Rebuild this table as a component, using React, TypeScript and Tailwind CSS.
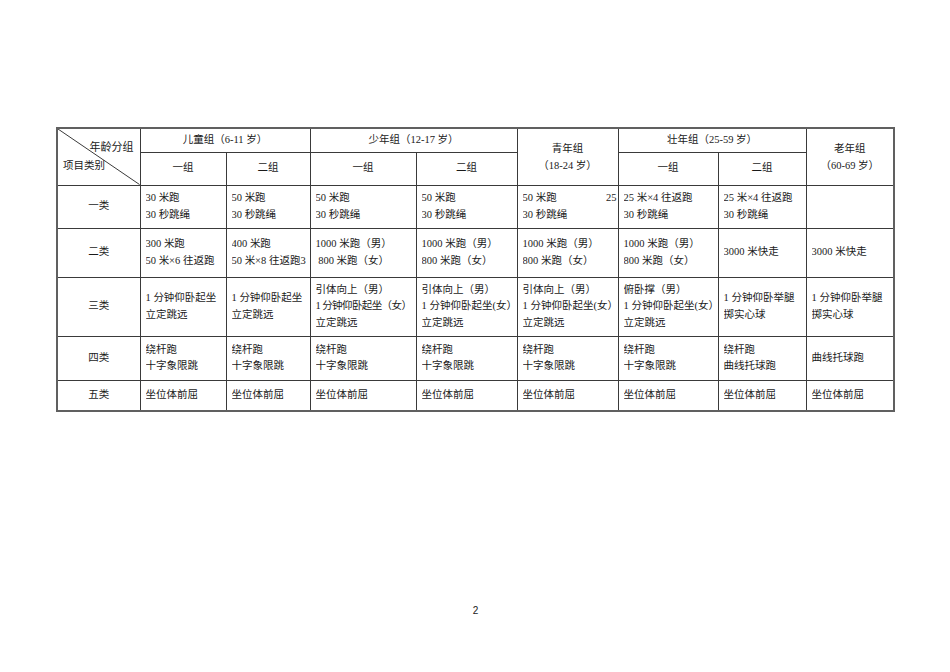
import React from "react";

const COLS = [83, 86, 84, 106, 101, 101, 100, 88, 88];

type Cell = string[];

const ROWS: { label: string; h: string; cells: Cell[] }[] = [
  {
    label: "一类",
    h: "h-[43px]",
    cells: [
      ["30 米跑", "30 秒跳绳"],
      ["50 米跑", "30 秒跳绳"],
      ["50 米跑", "30 秒跳绳"],
      ["50 米跑", "30 秒跳绳"],
      ["50 米跑", "30 秒跳绳"],
      ["25 米×4 往返跑", "30 秒跳绳"],
      ["25 米×4 往返跑", "30 秒跳绳"],
      [],
    ],
  },
  {
    label: "二类",
    h: "h-[49px]",
    cells: [
      ["300 米跑", "50 米×6 往返跑"],
      ["400 米跑", "50 米×8 往返跑3"],
      ["1000 米跑（男）", "\u00a0800 米跑（女）"],
      ["1000 米跑（男）", "800 米跑（女）"],
      ["1000 米跑（男）", "800 米跑（女）"],
      ["1000 米跑（男）", "800 米跑（女）"],
      ["3000 米快走"],
      ["3000 米快走"],
    ],
  },
  {
    label: "三类",
    h: "h-[59px]",
    cells: [
      ["1 分钟仰卧起坐", "立定跳远"],
      ["1 分钟仰卧起坐", "立定跳远"],
      ["引体向上（男）", "1 分钟仰卧起坐（女）", "立定跳远"],
      ["引体向上（男）", "1 分钟仰卧起坐(女）", "立定跳远"],
      ["引体向上（男）", "1 分钟仰卧起坐(女）", "立定跳远"],
      ["俯卧撑（男）", "1 分钟仰卧起坐(女）", "立定跳远"],
      ["1 分钟仰卧举腿", "掷实心球"],
      ["1 分钟仰卧举腿", "掷实心球"],
    ],
  },
  {
    label: "四类",
    h: "h-[44px]",
    cells: [
      ["绕杆跑", "十字象限跳"],
      ["绕杆跑", "十字象限跳"],
      ["绕杆跑", "十字象限跳"],
      ["绕杆跑", "十字象限跳"],
      ["绕杆跑", "十字象限跳"],
      ["绕杆跑", "十字象限跳"],
      ["绕杆跑", "曲线托球跑"],
      ["曲线托球跑"],
    ],
  },
  {
    label: "五类",
    h: "h-[31px]",
    cells: Array.from({ length: 8 }, () => ["坐位体前屈"]),
  },
];

const td = "border border-[#3a3a3a] align-middle";

export default function App() {
  return (
    <div
      className="min-h-[672px] w-[950px] bg-white text-[#1a1a1a]"
      style={{ fontFamily: '"Liberation Serif", "Noto Sans CJK SC", serif' }}
    >
      <div className="pl-[56px] pt-[127px]">
        <table className="w-[838px] table-fixed border-collapse border-2 border-[#606060] text-[10.5px] leading-[16.5px]">
          <colgroup>
            {COLS.map((w, i) => (
              <col key={i} style={{ width: w }} />
            ))}
          </colgroup>
          <thead>
            <tr className="h-[24px]">
              <td rowSpan={2} className={`${td} relative p-0`}>
                <svg className="absolute inset-0 h-full w-full" preserveAspectRatio="none" viewBox="0 0 100 100">
                  <line x1="0" y1="0" x2="100" y2="100" stroke="#3a3a3a" strokeWidth="1" vectorEffect="non-scaling-stroke" />
                </svg>
                <div className="flex flex-col">
                  <span className="self-end pr-[6px] text-[11px]">年龄分组</span>
                  <span className="self-start pl-[5px] pt-[2px]">项目类别</span>
                </div>
              </td>
              <td colSpan={2} className={`${td} text-center`}>儿童组（6-11 岁）</td>
              <td colSpan={2} className={`${td} text-center`}>少年组（12-17 岁）</td>
              <td rowSpan={2} className={`${td} text-center leading-[17px]`}>
                <div>青年组</div>
                <div>（18-24 岁）</div>
              </td>
              <td colSpan={2} className={`${td} text-center`}>壮年组（25-59 岁）</td>
              <td rowSpan={2} className={`${td} text-center leading-[17px]`}>
                <div>老年组</div>
                <div>（60-69 岁）</div>
              </td>
            </tr>
            <tr className="h-[33px]">
              {["一组", "二组", "一组", "二组", "一组", "二组"].map((t, i) => (
                <td key={i} className={`${td} text-center`}>{t}</td>
              ))}
            </tr>
          </thead>
          <tbody>
            {ROWS.map((row) => (
              <tr key={row.label} className={row.h}>
                <td className={`${td} text-center`}>{row.label}</td>
                {row.cells.map((lines, i) => (
                  <td key={i} className={`${td} overflow-hidden whitespace-nowrap pl-[5px] pr-0`}>
                    {lines.map((l, j) => (
                      <div key={j} className="flex justify-between overflow-hidden">
                        {/* the full-width-paren line only just fits its column */}
                        <span className={l === "1 分钟仰卧起坐（女）" ? "tracking-[-0.6px]" : ""}>{l}</span>
                        {row.label === "一类" && i === 4 && j === 0 ? <span className="pr-px">25</span> : null}
                      </div>
                    ))}
                  </td>
                ))}
              </tr>
            ))}
          </tbody>
        </table>
      </div>
      <div className="mt-[194px] w-[950px] text-center text-[10px] leading-none" style={{ fontFamily: '"Liberation Sans", sans-serif' }}>
        <span className="pl-[1px]">2</span>
      </div>
    </div>
  );
}
